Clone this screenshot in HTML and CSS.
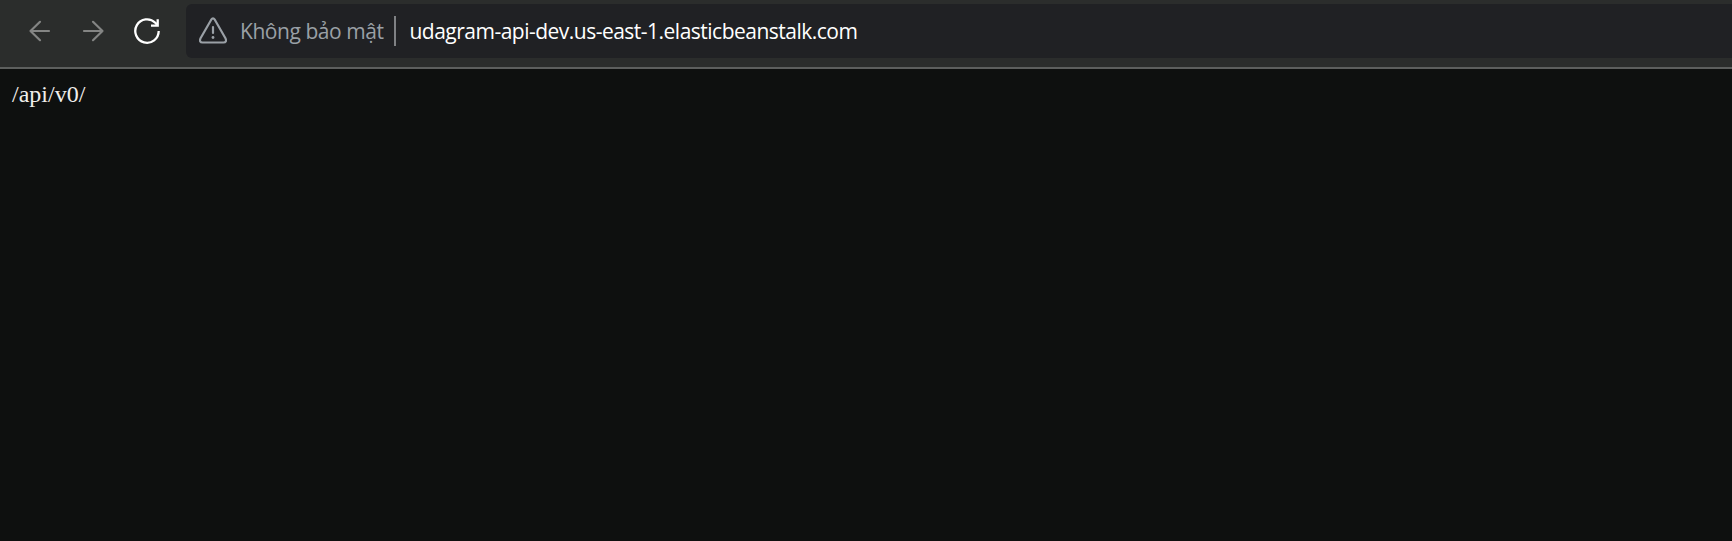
FILE: index.html
```
<!DOCTYPE html>
<html lang="vi">
<head>
<meta charset="utf-8">
<title>udagram-api-dev</title>
<link rel="stylesheet" href="styles.css">
</head>
<body>
<header class="toolbar">
  <nav class="nav">
    <svg class="icon" viewBox="0 0 28 28"><path d="M23 14H4.500M14 4.800L4.500 14L14 23.200"/></svg>
    <svg class="icon" viewBox="0 0 28 28"><path d="M4 14h18.500M13 4.800L22.500 14L13 23.200"/></svg>
    <svg class="icon reload" viewBox="0 0 28 28"><path d="M24.700 14A11.700 11.700 0 1 1 21.300 5.800L23 7.600"/><path d="M23.700 2.200V8.600H17"/></svg>
  </nav>
  <div class="address">
    <svg class="warning" viewBox="0 0 28 28"><path d="M12.200 2.700L1.400 21.500Q0 25.500 3.500 25.500H24.500Q28 25.500 26.600 21.500L15.800 2.700Q14 .2 12.200 2.700Z"/><path d="M14 10v6"/><circle cx="14" cy="20.500" r="1.400"/></svg>
    <span class="security">Không bảo mật</span>
    <span class="divider"></span>
    <span class="url">udagram-api-dev.us-east-1.elasticbeanstalk.com</span>
  </div>
</header>
<main class="page">/api/v0/</main>
</body>
</html>
```
FILE: styles.css
```
body {
  margin: 0;
  min-height: 541px;
  background: #0e100f;
}
.toolbar {
  box-sizing: border-box;
  display: flex;
  height: 69px;
  padding-top: 4px;
  background: #2b2d2c;
  border-bottom: 2px solid #5d5f5e;
}
.nav {
  display: flex;
  gap: 26px;
  width: 160px;
  padding: 13px 0 0 26px;
}
.icon, .warning {
  flex: none;
  width: 28px;
  height: 28px;
  fill: none;
  stroke: #848584;
  stroke-width: 2.2;
  stroke-linecap: round;
  stroke-linejoin: round;
}
.icon.reload {
  stroke: #fff;
  stroke-width: 2.3;
  stroke-linecap: butt;
  stroke-linejoin: miter;
}
.address {
  flex: 1;
  display: flex;
  align-items: center;
  height: 54px;
  box-sizing: border-box;
  padding-left: 13px;
  border-radius: 6px 0 0 6px;
  background: #202124;
  font: 21px/30px "Open Sans", "Noto Sans", sans-serif;
  white-space: nowrap;
}
.warning {
  stroke: #9aa0a6;
}
.warning circle {
  fill: #9aa0a6;
  stroke: none;
}
.security {
  width: 154px;
  margin-left: 13px;
  color: #9aa0a6;
  letter-spacing: -.45px;
}
.divider {
  width: 2px;
  height: 30px;
  background: #7f8184;
}
.url {
  margin-left: 13.500px;
  color: #fff;
  letter-spacing: -.51px;
}
.page {
  padding: 11px 12px;
  color: #f0eeeb;
  font: 24px/28px "Liberation Serif", serif;
}
```
